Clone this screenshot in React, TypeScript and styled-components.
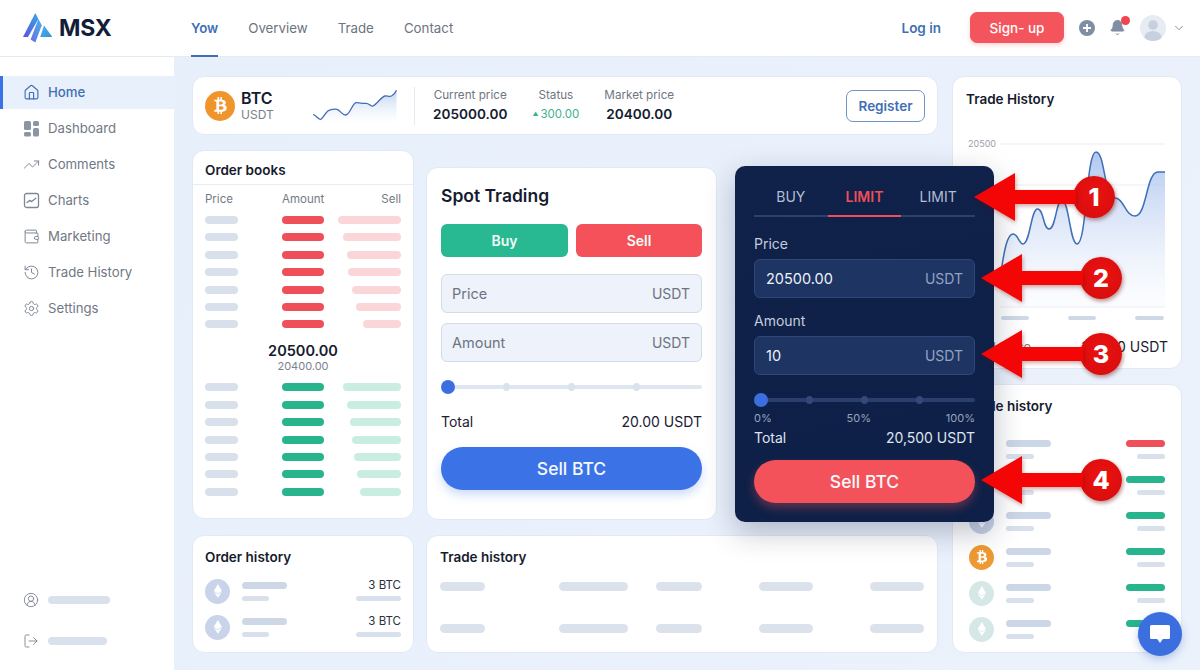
import React from "react";
import styled, { createGlobalStyle } from "styled-components";
import { Home, TrendingUp, Wallet, History, Settings, CircleUserRound, LogOut, Bell, ChevronDown } from "lucide-react";
import { FaBtc, FaEthereum } from "react-icons/fa";

const Global = createGlobalStyle`
  html, body { margin: 0; padding: 0; background: #e8f0fb; }
  * { box-sizing: border-box; }
  body { font-family: Inter, "Liberation Sans", sans-serif; color: #141a2e; }
`;

const Page = styled.div`
  position: relative;
  width: 1200px;
  height: 670px;
  overflow: hidden;
  display: flex;
  flex-direction: column;
  background: linear-gradient(120deg, #e7effb, #ebf2fc);
`;

/* ---------- header ---------- */
const Header = styled.header`
  height: 57px;
  flex: none;
  display: flex;
  align-items: center;
  padding: 0 14px 1px 23px;
  background: #fff;
  border-bottom: 1px solid #e6ebf3;
`;
const Logo = styled.div`
  width: 168px;
  display: flex;
  align-items: center;
  gap: 7px;
`;
const LogoText = styled.span`
  font-size: 23px;
  font-weight: 700;
  letter-spacing: -0.2px;
  color: #131d39;
`;
const Nav = styled.nav`
  display: flex;
  gap: 30px;
  align-self: flex-start;
`;
const NavItem = styled.a<{ $active?: boolean }>`
  display: flex;
  align-items: center;
  height: 57px;
  font-size: 13.3px;
  font-weight: ${p => (p.$active ? 600 : 400)};
  color: ${p => (p.$active ? "#3f6fb5" : "#6d7480")};
  border-bottom: 2px solid ${p => (p.$active ? "#3f6fb5" : "transparent")};
`;
const HeaderRight = styled.div`
  margin-left: auto;
  display: flex;
  align-items: center;
`;
const LogIn = styled.a`
  font-size: 13.5px;
  font-weight: 600;
  color: #3f6fb5;
  margin-right: 29px;
`;
const SignUp = styled.button`
  width: 94px;
  height: 31px;
  border: 1px solid #ef5a62;
  border-radius: 7px;
  background: #f4555d;
  color: #fff;
  font: 500 13.5px Inter, sans-serif;
  margin-right: 15px;
  box-shadow: 0 2px 4px rgba(240, 80, 90, 0.25);
`;
const PlusIcon = styled.div`
  width: 16px;
  height: 16px;
  margin-right: 14px;
  display: flex;
`;
const BellWrap = styled.div`
  position: relative;
  width: 16px;
  height: 18px;
  margin-right: 15px;
  color: #7f8ea3;
  &::after {
    content: "";
    position: absolute;
    top: -3px;
    right: -5px;
    width: 9px;
    height: 9px;
    border-radius: 50%;
    background: #f0444e;
  }
`;
const Avatar = styled.div`
  width: 26px;
  height: 26px;
  margin-right: 6px;
  display: flex;
`;

/* ---------- shell ---------- */
const Body = styled.div`
  flex: 1;
  display: flex;
  min-height: 0;
`;
const Sidebar = styled.aside`
  width: 174px;
  flex: none;
  display: flex;
  flex-direction: column;
  padding: 19px 0 19px;
  background: #fff;
`;
const SideList = styled.div`
  display: flex;
  flex-direction: column;
  gap: 3px;
`;
const SideItem = styled.a<{ $active?: boolean }>`
  height: 33px;
  display: flex;
  align-items: center;
  gap: 8px;
  padding-left: ${p => (p.$active ? 20 : 23)}px;
  padding-bottom: 1px;
  font-size: 13.2px;
  font-weight: ${p => (p.$active ? 500 : 400)};
  color: ${p => (p.$active ? "#3f6fb5" : "#717885")};
  background: ${p => (p.$active ? "#e8f0fb" : "transparent")};
  border-left: ${p => (p.$active ? "3px solid #3b73e6" : "none")};
  svg { flex: none; color: ${p => (p.$active ? "#3f6fb5" : "#7d8797")}; }
`;
const SideFoot = styled.div`
  margin-top: auto;
  display: flex;
  flex-direction: column;
  gap: 21px;
  padding-left: 23px;
`;
const FootRow = styled.div`
  height: 20px;
  display: flex;
  align-items: center;
  gap: 9px;
  color: #767d89;
`;
const Main = styled.main`
  flex: 1;
  display: grid;
  grid-template-columns: 746px 230px;
  gap: 14px;
  padding: 19px 0 0 18px;
  align-content: start;
`;
const LeftColumn = styled.div`
  display: flex;
  flex-direction: column;
  gap: 15px;
`;
const RightColumn = styled.div`
  display: flex;
  flex-direction: column;
  gap: 15px;
`;
const Card = styled.section`
  background: #fff;
  border: 1px solid #e1e9f5;
  border-radius: 12px;
`;
const CardTitle = styled.h3`
  margin: 0;
  font-size: 13.5px;
  line-height: 16px;
  font-weight: 600;
  color: #161b2e;
`;

/* ---------- ticker ---------- */
const Ticker = styled(Card)`
  height: 59px;
  display: flex;
  align-items: center;
  padding: 0 12px;
`;
const Pair = styled.div`
  width: 108px;
  display: flex;
  align-items: center;
  gap: 6px;
`;
const CoinBadge = styled.div<{ $size: number; $bg: string }>`
  width: ${p => p.$size}px;
  height: ${p => p.$size}px;
  flex: none;
  border-radius: 50%;
  background: ${p => p.$bg};
  color: #fff;
  display: flex;
  align-items: center;
  justify-content: center;
`;
const PairName = styled.div`
  font-size: 16px;
  line-height: 18px;
  font-weight: 600;
  color: #161b2e;
`;
const PairQuote = styled.div`
  font-size: 12px;
  line-height: 15px;
  color: #7b818c;
`;
const Divider = styled.div`
  width: 1px;
  height: 38px;
  margin: 0 18px 0 17px;
  background: #e6ebf3;
`;
const Stats = styled.div`
  display: flex;
  gap: 25px;
`;
const Stat = styled.div`
  display: flex;
  flex-direction: column;
  align-items: center;
  gap: 2px;
`;
const StatLabel = styled.div`
  font-size: 11.7px;
  line-height: 15px;
  color: #6f7681;
  white-space: nowrap;
`;
const StatValue = styled.div<{ $green?: boolean }>`
  font-size: ${p => (p.$green ? 11.5 : 13.6)}px;
  line-height: 18px;
  font-weight: ${p => (p.$green ? 400 : 600)};
  color: ${p => (p.$green ? "#3fb08f" : "#161b2e")};
  white-space: nowrap;
`;
const UpMark = styled.span`
  font-size: 6px;
  vertical-align: 2px;
  margin-right: 2px;
`;
const Register = styled.button`
  margin-left: auto;
  width: 79px;
  height: 32px;
  background: #fff;
  border: 1.5px solid #7393c4;
  border-radius: 7px;
  color: #3f6fb5;
  font: 600 13.5px Inter, sans-serif;
`;

/* ---------- middle ---------- */
const MiddleRow = styled.div`
  height: 370px;
  display: flex;
  align-items: flex-start;
`;
const OrderBooks = styled(Card)`
  width: 222px;
  height: 369px;
  flex: none;
`;
const BookHead = styled.div`
  padding: 11px 12px 6px;
  border-bottom: 1px solid #e8ecf3;
`;
const BookGrid = styled.div`
  display: grid;
  grid-template-columns: 77px 42px 1fr;
  padding: 0 12px;
`;
const ColHead = styled(BookGrid)`
  padding-top: 7px;
  padding-bottom: 10px;
  font-size: 11.5px;
  line-height: 14px;
  color: #737a85;
  span:last-child { justify-self: end; }
`;
const BookRows = styled.div`
  display: flex;
  flex-direction: column;
  gap: 9.4px;
`;
const BookRow = styled(BookGrid)`
  align-items: center;
  div:last-child { justify-self: end; }
`;
const Bar = styled.div<{ $w: number; $h?: number; $c?: string }>`
  width: ${p => p.$w}px;
  height: ${p => p.$h ?? 8}px;
  flex: none;
  border-radius: ${p => (p.$h ?? 8) / 2 + 1}px;
  background: ${p => p.$c ?? "#d8e0ec"};
`;
const MidPrice = styled.div`
  padding: 14px 0 11px;
  text-align: center;
`;
const MidMain = styled.div`
  font-size: 14.5px;
  line-height: 18px;
  font-weight: 600;
  color: #161b2e;
`;
const MidSub = styled.div`
  font-size: 11px;
  line-height: 12px;
  color: #7b818c;
`;

const Spot = styled(Card)`
  width: 291px;
  height: 353px;
  flex: none;
  margin: 17px 0 0 12px;
  padding: 17px 14px;
`;
const SpotTitle = styled.h2`
  margin: 0;
  font-size: 17.5px;
  line-height: 22px;
  font-weight: 600;
  color: #161b2e;
`;
const SideButtons = styled.div`
  margin-top: 17px;
  display: grid;
  grid-template-columns: 127px 126px;
  gap: 8px;
`;
const SideButton = styled.button<{ $bg: string }>`
  height: 33px;
  border: 0;
  border-radius: 6px;
  background: ${p => p.$bg};
  color: #f3fbf8;
  font: 600 14px Inter, sans-serif;
`;
const FieldStack = styled.div`
  margin-top: 17px;
  display: flex;
  flex-direction: column;
  gap: 10px;
`;
const Field = styled.div<{ $dark?: boolean }>`
  height: 39px;
  display: flex;
  align-items: center;
  justify-content: space-between;
  padding: 0 11px 0 ${p => (p.$dark ? 11 : 10)}px;
  font-size: 14.5px;
  border-radius: 6px;
  border: 1px solid ${p => (p.$dark ? "#2f4778" : "#d3dce9")};
  background: ${p => (p.$dark ? "#1e3463" : "#edf2fb")};
  color: ${p => (p.$dark ? "#eef2f9" : "#6d7480")};
`;
const FieldUnit = styled.span<{ $dark?: boolean }>`
  font-size: 14px;
  color: ${p => (p.$dark ? "#93a3c1" : "#6d7480")};
`;
const Slider = styled.div<{ $mt: number; $track: string }>`
  position: relative;
  height: 14px;
  margin-top: ${p => p.$mt}px;
  &::before {
    content: "";
    position: absolute;
    left: 0;
    right: 0;
    top: 5px;
    height: 4px;
    border-radius: 2px;
    background: ${p => p.$track};
  }
`;
const SliderDot = styled.i<{ $at: number; $c: string }>`
  position: absolute;
  left: ${p => p.$at}%;
  top: 3px;
  width: 7px;
  height: 8px;
  margin-left: -3.5px;
  border-radius: 50%;
  background: ${p => p.$c};
`;
const Thumb = styled.i`
  position: absolute;
  left: 0;
  top: 0;
  width: 14px;
  height: 14px;
  border-radius: 50%;
  background: #3b6fe0;
`;
const TotalRow = styled.div<{ $mt: number; $dark?: boolean }>`
  margin-top: ${p => p.$mt}px;
  display: flex;
  justify-content: space-between;
  font-size: 14px;
  line-height: 14px;
  color: ${p => (p.$dark ? "#dfe5f0" : "#1b2030")};
`;
const PillButton = styled.button<{ $bg: string; $glow: string; $mt: number }>`
  display: block;
  width: 100%;
  height: 43px;
  margin-top: ${p => p.$mt}px;
  border: 0;
  border-radius: 22px;
  background: ${p => p.$bg};
  color: #f6f8fc;
  font: 500 17.5px Inter, sans-serif;
  box-shadow: 0 5px 10px ${p => p.$glow};
`;

/* ---------- dark panel (overlaps the right column) ---------- */
const DarkPanel = styled.div`
  position: relative;
  z-index: 2;
  width: 259px;
  height: 356px;
  flex: none;
  margin: 16px 0 0 18px;
  padding: 23px 19px 19px;
  border-radius: 10px;
  background: linear-gradient(170deg, #10214a, #0e2047);
  box-shadow: 0 10px 30px rgba(20, 30, 60, 0.28);
`;
const Tabs = styled.div`
  display: grid;
  grid-template-columns: repeat(3, 1fr);
  border-bottom: 2px solid #2c4068;
`;
const Tab = styled.div<{ $active?: boolean }>`
  margin-bottom: -2px;
  padding-bottom: 10px;
  text-align: center;
  font-size: 14px;
  line-height: 16px;
  font-weight: ${p => (p.$active ? 600 : 400)};
  color: ${p => (p.$active ? "#ef4e59" : "#b3bfd3")};
  border-bottom: 2px solid ${p => (p.$active ? "#ef4e59" : "transparent")};
`;
const DarkLabel = styled.div<{ $mt: number }>`
  margin: ${p => p.$mt}px 0 7px;
  font-size: 14px;
  line-height: 16px;
  color: #c3cddf;
`;
const Ticks = styled.div`
  margin-top: 5px;
  display: flex;
  justify-content: space-between;
  font-size: 11px;
  line-height: 12px;
  color: #96a4c0;
`;

/* ---------- bottom ---------- */
const BottomRow = styled.div`
  display: flex;
  gap: 12px;
  height: 118px;
`;
const OrderHistory = styled(Card)`
  width: 222px;
  padding: 13px 12px;
`;
const TradeHistory = styled(Card)`
  flex: 1;
  padding: 13px;
`;
const MiniRows = styled.div<{ $mt: number }>`
  margin-top: ${p => p.$mt}px;
  display: flex;
  flex-direction: column;
  gap: 16px;
`;
const MiniRow = styled.div`
  height: 20px;
  display: flex;
  align-items: center;
  justify-content: space-between;
`;
const MiniLeft = styled.div`
  display: flex;
  align-items: center;
  gap: 12px;
`;
const Lines = styled.div`
  display: flex;
  flex-direction: column;
  gap: 7px;
`;
const LinesEnd = styled(Lines)`
  align-items: flex-end;
`;
const BtcAmount = styled.div`
  height: 7px;
  line-height: 7px;
  font-size: 11.5px;
  color: #2a3040;
`;
const PlainRows = styled.div`
  margin-top: 17px;
  display: flex;
  flex-direction: column;
  gap: 33px;
`;
const PlainRow = styled.div`
  display: grid;
  grid-template-columns: 119px 97px 103px 111px 54px;
`;

/* ---------- right column ---------- */
const ChartCard = styled(Card)`
  height: 293px;
  padding: 14px 13px;
`;
const ChartSvg = styled.svg`
  display: block;
  width: 202px;
  height: 190px;
  margin-top: 28px;
`;
const ChartFoot = styled.div`
  margin-top: 14px;
  display: flex;
  justify-content: space-between;
  font-size: 14px;
  line-height: 16px;
  color: #1b2030;
`;
const ChartFootLabel = styled.span`
  font-size: 13px;
  color: #717885;
`;
const HistoryCard = styled(Card)`
  height: 269px;
  padding: 13px;
`;
const HistoryRows = styled(MiniRows)`
  padding: 0 3px;
`;

/* ---------- overlays ---------- */
const ChatButton = styled.div`
  position: absolute;
  left: 1138px;
  top: 612px;
  width: 44px;
  height: 44px;
  border-radius: 50%;
  background: #3b6fe0;
  display: flex;
  align-items: center;
  justify-content: center;
  box-shadow: 0 3px 8px rgba(50, 90, 180, 0.3);
`;
const Callout = styled.div<{ $x: number; $y: number }>`
  position: absolute;
  z-index: 5;
  left: ${p => p.$x}px;
  top: ${p => p.$y - 24}px;
  height: 48px;
  display: flex;
  align-items: center;
`;
const ArrowSvg = styled.svg`
  display: block;
  filter: drop-shadow(1px 2px 2px rgba(120, 0, 0, 0.35));
`;
const Badge = styled.div`
  width: 42px;
  height: 42px;
  margin-left: -3px;
  border-radius: 50%;
  background: radial-gradient(circle at 50% 40%, #ec1212, #d40c0c);
  color: #fff;
  font-size: 25px;
  font-weight: 800;
  line-height: 42px;
  text-align: center;
  box-shadow: 1px 2px 4px rgba(90, 0, 0, 0.45);
`;

/* ---------- drawings ---------- */
const LogoMark = () => (
  <svg width="29" height="30" viewBox="0 0 29 30">
    <defs>
      <linearGradient id="lg1" x1="0" y1="1" x2="0.7" y2="0">
        <stop offset="0" stopColor="#5a55dc" />
        <stop offset="1" stopColor="#3f9be8" />
      </linearGradient>
      <linearGradient id="lg2" x1="0" y1="1" x2="0.6" y2="0">
        <stop offset="0" stopColor="#5560e0" />
        <stop offset="1" stopColor="#3e9be6" />
      </linearGradient>
      <linearGradient id="lg3" x1="0" y1="0" x2="1" y2="1">
        <stop offset="0" stopColor="#49b4ea" />
        <stop offset="1" stopColor="#3a8fd8" />
      </linearGradient>
    </defs>
    <path d="M12.3 0 L0 24 L5 24 L15.4 6 Z" fill="url(#lg1)" />
    <path d="M15.4 6 L18.8 12.2 L12.3 29.5 L7.6 26.4 Z" fill="url(#lg2)" opacity=".9" />
    <path d="M21 12.4 L29.3 24 L17.2 24 Z" fill="url(#lg3)" />
  </svg>
);

const DashboardIcon = () => (
  <svg width="17" height="17" viewBox="0 0 17 17" fill="#8c95a4">
    <rect x="1" y="1" width="7" height="9" rx="1.5" />
    <rect x="10" y="1" width="6" height="5" rx="1.5" />
    <rect x="1" y="12" width="7" height="4.5" rx="1.5" />
    <rect x="10" y="8" width="6" height="8.5" rx="1.5" />
  </svg>
);
const ChartBoxIcon = () => (
  <svg width="17" height="17" viewBox="0 0 17 17" fill="none" stroke="#7d8797" strokeWidth="1.3" strokeLinejoin="round" strokeLinecap="round">
    <rect x="1.5" y="1.5" width="14" height="14" rx="2" />
    <path d="M4 10.5 L6.6 8.4 L8.6 9.6 L12.8 6.2" />
  </svg>
);

const SPARK = "M0 25.3 C3 26 5 30.5 7.4 30.3 C10 30 12.5 22.5 16 21.3 C19 20.3 21.5 20 24 20.3 C27 21 29 26.5 33 26 C37 25 39.5 14.5 43 13.7 C46 13.2 50 15 53 14.3 C56 14 57.5 18 60 17 C64 15 68 8 72 7 C74 6.6 76.5 8 78.5 7 C80.5 6 82.5 3.5 83.5 1.3";
const Spark = () => (
  <svg width="84" height="34" viewBox="0 0 84 34">
    <defs>
      <linearGradient id="sparkFill" x1="0" y1="0" x2="0" y2="1">
        <stop offset="0" stopColor="#a9c3ee" stopOpacity=".75" />
        <stop offset="1" stopColor="#dfe9f9" stopOpacity="0" />
      </linearGradient>
    </defs>
    <path d={SPARK + " L83.5 34 L0 34 Z"} fill="url(#sparkFill)" />
    <path d={SPARK} fill="none" stroke="#3f6fb5" strokeWidth="1.3" />
  </svg>
);

const LINE =
  "M1001 272 C1004 252 1007 234 1013 234 C1018 234 1019 244 1023 244 C1030 244 1031 209 1037.5 209 C1044 209 1043 229 1049 229 C1056 229 1056 200 1062 200 C1069 200 1070 244 1077 244 C1087 244 1086 152 1096 152 C1105 152 1104 198 1115 198 C1124 198 1125 216 1135 216 C1147 216 1146 172 1158 172 L1165 172";
const TradeChart = () => (
  <ChartSvg viewBox="966 135 202 190">
    <defs>
      <linearGradient id="chartFill" x1="0" y1="0" x2="0" y2="1">
        <stop offset="0" stopColor="#9db9ec" stopOpacity=".8" />
        <stop offset="1" stopColor="#e6eefb" stopOpacity=".15" />
      </linearGradient>
    </defs>
    <text x="968" y="147" fontSize="9" fill="#9aa1ad" fontFamily="Inter, sans-serif">20500</text>
    <path d="M1000 144 H1165 M1000 185 H1165 M1000 307 H1165" stroke="#e9edf3" strokeWidth="1" fill="none" />
    <path d={LINE + " L1165 307 L1001 307 Z"} fill="url(#chartFill)" />
    <path d={LINE} fill="none" stroke="#3f6fb5" strokeWidth="1.5" />
    <rect x="1001" y="316" width="28" height="4" rx="2" fill="#cfd8e6" />
    <rect x="1068" y="316" width="28" height="4" rx="2" fill="#cfd8e6" />
    <rect x="1135" y="316" width="29" height="4" rx="2" fill="#cfd8e6" />
  </ChartSvg>
);

const Arrow = () => (
  <ArrowSvg width="102" height="48" viewBox="0 0 102 48">
    <path d="M0 24 L41 0 V17 H102 V31 H41 V48 Z" fill="#f40606" />
  </ArrowSvg>
);

const Eth = ({ size, bg }: { size: number; bg: string }) => (
  <CoinBadge $size={size} $bg={bg}>
    <FaEthereum size={size * 0.55} />
  </CoinBadge>
);

/* ---------- data ---------- */
const NAV = ["Overview", "Trade", "Contact"];
const ASK = [63, 58, 54.5, 53, 49, 45, 38];
const BID = [58, 54, 51.5, 49, 47, 44, 41];
const HISTORY_ICONS = ["#c6d1e6", "#c6d1e6", "#c6d1e6", "btc", "#d6e8e6", "#d6e8e6"];
const TRADE_BARS = [45, 69, 46, 54, 54];
const RED = "#ee4f59";
const GREEN = "#28b48d";

const SIDE = [
  { label: "Dashboard", icon: <DashboardIcon /> },
  { label: "Comments", icon: <TrendingUp size={17} strokeWidth={1.4} /> },
  { label: "Charts", icon: <ChartBoxIcon /> },
  { label: "Marketing", icon: <Wallet size={17} strokeWidth={1.4} /> },
  { label: "Trade History", icon: <History size={17} strokeWidth={1.4} /> },
  { label: "Settings", icon: <Settings size={17} strokeWidth={1.4} /> },
];

const Sl = ({ mt, track, dot }: { mt: number; track: string; dot: string }) => (
  <Slider $mt={mt} $track={track}>
    {[25, 50, 75].map(a => (
      <SliderDot key={a} $at={a} $c={dot} />
    ))}
    <Thumb />
  </Slider>
);

export default function App() {
  return (
    <Page>
      <Global />
      <Header>
        <Logo>
          <LogoMark />
          <LogoText>MSX</LogoText>
        </Logo>
        <Nav>
          <NavItem $active>Yow</NavItem>
          {NAV.map(n => (
            <NavItem key={n}>{n}</NavItem>
          ))}
        </Nav>
        <HeaderRight>
          <LogIn>Log in</LogIn>
          <SignUp>Sign- up</SignUp>
          <PlusIcon>
            <svg width="16" height="16" viewBox="0 0 16 16">
              <circle cx="8" cy="8" r="8" fill="#7f8ea3" />
              <path d="M8 4 V12 M4 8 H12" stroke="#fff" strokeWidth="1.8" />
            </svg>
          </PlusIcon>
          <BellWrap>
            <Bell size={17} fill="#7f8ea3" strokeWidth={1.4} />
          </BellWrap>
          <Avatar>
            <svg width="26" height="26" viewBox="0 0 26 26">
              <defs>
                <clipPath id="avatarClip">
                  <circle cx="13" cy="13" r="13" />
                </clipPath>
              </defs>
              <circle cx="13" cy="13" r="13" fill="#e6ebf4" />
              <g clipPath="url(#avatarClip)" fill="#c7d0df">
                <circle cx="13" cy="10" r="4.8" />
                <ellipse cx="13" cy="22" rx="8.5" ry="6" />
              </g>
            </svg>
          </Avatar>
          <ChevronDown size={14} color="#7f8793" strokeWidth={1.6} />
        </HeaderRight>
      </Header>

      <Body>
        <Sidebar>
          <SideList>
            <SideItem $active>
              <Home size={17} strokeWidth={1.6} />
              Home
            </SideItem>
            {SIDE.map(s => (
              <SideItem key={s.label}>
                {s.icon}
                {s.label}
              </SideItem>
            ))}
          </SideList>
          <SideFoot>
            <FootRow>
              <CircleUserRound size={16} strokeWidth={1.3} />
              <Bar $w={62} $c="#d9e1ec" />
            </FootRow>
            <FootRow>
              <LogOut size={16} strokeWidth={1.3} />
              <Bar $w={59} $c="#d9e1ec" />
            </FootRow>
          </SideFoot>
        </Sidebar>

        <Main>
          <LeftColumn>
            <Ticker>
              <Pair>
                <CoinBadge $size={30} $bg="#f0952c">
                  <FaBtc size={17} />
                </CoinBadge>
                <div>
                  <PairName>BTC</PairName>
                  <PairQuote>USDT</PairQuote>
                </div>
              </Pair>
              <Spark />
              <Divider />
              <Stats>
                <Stat>
                  <StatLabel>Current price</StatLabel>
                  <StatValue>205000.00</StatValue>
                </Stat>
                <Stat>
                  <StatLabel>Status</StatLabel>
                  <StatValue $green>
                    <UpMark>▲</UpMark>300.00
                  </StatValue>
                </Stat>
                <Stat>
                  <StatLabel>Market price</StatLabel>
                  <StatValue>20400.00</StatValue>
                </Stat>
              </Stats>
              <Register>Register</Register>
            </Ticker>

            <MiddleRow>
              <OrderBooks>
                <BookHead>
                  <CardTitle>Order books</CardTitle>
                </BookHead>
                <ColHead>
                  <span>Price</span>
                  <span>Amount</span>
                  <span>Sell</span>
                </ColHead>
                <BookRows>
                  {ASK.map(w => (
                    <BookRow key={w}>
                      <Bar $w={33} />
                      <Bar $w={42} $c={RED} />
                      <Bar $w={w} $c="#fbd6d9" />
                    </BookRow>
                  ))}
                </BookRows>
                <MidPrice>
                  <MidMain>20500.00</MidMain>
                  <MidSub>20400.00</MidSub>
                </MidPrice>
                <BookRows>
                  {BID.map(w => (
                    <BookRow key={w}>
                      <Bar $w={33} />
                      <Bar $w={42} $c={GREEN} />
                      <Bar $w={w} $c="#c9eee1" />
                    </BookRow>
                  ))}
                </BookRows>
              </OrderBooks>

              <Spot>
                <SpotTitle>Spot Trading</SpotTitle>
                <SideButtons>
                  <SideButton $bg="#28b992">Buy</SideButton>
                  <SideButton $bg="#f4515a">Sell</SideButton>
                </SideButtons>
                <FieldStack>
                  <Field>
                    Price
                    <FieldUnit>USDT</FieldUnit>
                  </Field>
                  <Field>
                    Amount
                    <FieldUnit>USDT</FieldUnit>
                  </Field>
                </FieldStack>
                <Sl mt={18} track="#dfe6ef" dot="#d9e2ed" />
                <TotalRow $mt={21}>
                  <span>Total</span>
                  <span>20.00 USDT</span>
                </TotalRow>
                <PillButton $bg="#3b73e6" $glow="rgba(59,115,230,.25)" $mt={18}>
                  Sell BTC
                </PillButton>
              </Spot>

              <DarkPanel>
                <Tabs>
                  <Tab>BUY</Tab>
                  <Tab $active>LIMIT</Tab>
                  <Tab>LIMIT</Tab>
                </Tabs>
                <DarkLabel $mt={19}>Price</DarkLabel>
                <Field $dark>
                  20500.00
                  <FieldUnit $dark>USDT</FieldUnit>
                </Field>
                <DarkLabel $mt={15}>Amount</DarkLabel>
                <Field $dark>
                  10
                  <FieldUnit $dark>USDT</FieldUnit>
                </Field>
                <Sl mt={18} track="#2a3f6c" dot="#34497a" />
                <Ticks>
                  <span>0%</span>
                  <span>50%</span>
                  <span>100%</span>
                </Ticks>
                <TotalRow $mt={7} $dark>
                  <span>Total</span>
                  <span>20,500 USDT</span>
                </TotalRow>
                <PillButton $bg="#f4525b" $glow="rgba(244,82,91,.35)" $mt={15}>
                  Sell BTC
                </PillButton>
              </DarkPanel>
            </MiddleRow>

            <BottomRow>
              <OrderHistory>
                <CardTitle>Order history</CardTitle>
                <MiniRows $mt={16}>
                  {[0, 1].map(i => (
                    <MiniRow key={i}>
                      <MiniLeft>
                        <Eth size={25} bg="#c9d3ea" />
                        <Lines>
                          <Bar $w={45} $h={7} $c="#cdd7e6" />
                          <Bar $w={27} $h={5} />
                        </Lines>
                      </MiniLeft>
                      <LinesEnd>
                        <BtcAmount>3 BTC</BtcAmount>
                        <Bar $w={45} $h={5} />
                      </LinesEnd>
                    </MiniRow>
                  ))}
                </MiniRows>
              </OrderHistory>
              <TradeHistory>
                <CardTitle>Trade history</CardTitle>
                <PlainRows>
                  {[0, 1].map(r => (
                    <PlainRow key={r}>
                      {TRADE_BARS.map((w, i) => (
                        <Bar key={i} $w={w} $h={9} $c="#dce2ec" />
                      ))}
                    </PlainRow>
                  ))}
                </PlainRows>
              </TradeHistory>
            </BottomRow>
          </LeftColumn>

          <RightColumn>
            <ChartCard>
              <CardTitle>Trade History</CardTitle>
              <TradeChart />
              <ChartFoot>
                <ChartFootLabel>Total Price</ChartFootLabel>
                <span>10,500 USDT</span>
              </ChartFoot>
            </ChartCard>
            <HistoryCard>
              <CardTitle>Trade history</CardTitle>
              <HistoryRows $mt={25}>
                {HISTORY_ICONS.map((c, i) => (
                  <MiniRow key={i}>
                    <MiniLeft>
                      {c === "btc" ? (
                        <CoinBadge $size={25} $bg="#ee9a32">
                          <FaBtc size={14} />
                        </CoinBadge>
                      ) : (
                        <Eth size={25} bg={c} />
                      )}
                      <Lines>
                        <Bar $w={45} $h={7} $c="#cbd6e6" />
                        <Bar $w={28} $h={5} />
                      </Lines>
                    </MiniLeft>
                    <LinesEnd>
                      <Bar $w={39} $h={7} $c={i === 0 ? RED : GREEN} />
                      <Bar $w={28} $h={5} />
                    </LinesEnd>
                  </MiniRow>
                ))}
              </HistoryRows>
            </HistoryCard>
          </RightColumn>
        </Main>
      </Body>

      <ChatButton>
        <svg width="22" height="21" viewBox="0 0 22 21">
          <path d="M2.5 1 H19.5 A1.5 1.5 0 0 1 21 2.5 V13.5 A1.5 1.5 0 0 1 19.5 15 H13.8 L11 19 L8.2 15 H2.5 A1.5 1.5 0 0 1 1 13.5 V2.5 A1.5 1.5 0 0 1 2.5 1 Z" fill="#fff" />
        </svg>
      </ChatButton>

      <Callout $x={974} $y={197}>
        <Arrow />
        <Badge>1</Badge>
      </Callout>
      <Callout $x={981} $y={278}>
        <Arrow />
        <Badge>2</Badge>
      </Callout>
      <Callout $x={981} $y={354}>
        <Arrow />
        <Badge>3</Badge>
      </Callout>
      <Callout $x={981} $y={480}>
        <Arrow />
        <Badge>4</Badge>
      </Callout>
    </Page>
  );
}
